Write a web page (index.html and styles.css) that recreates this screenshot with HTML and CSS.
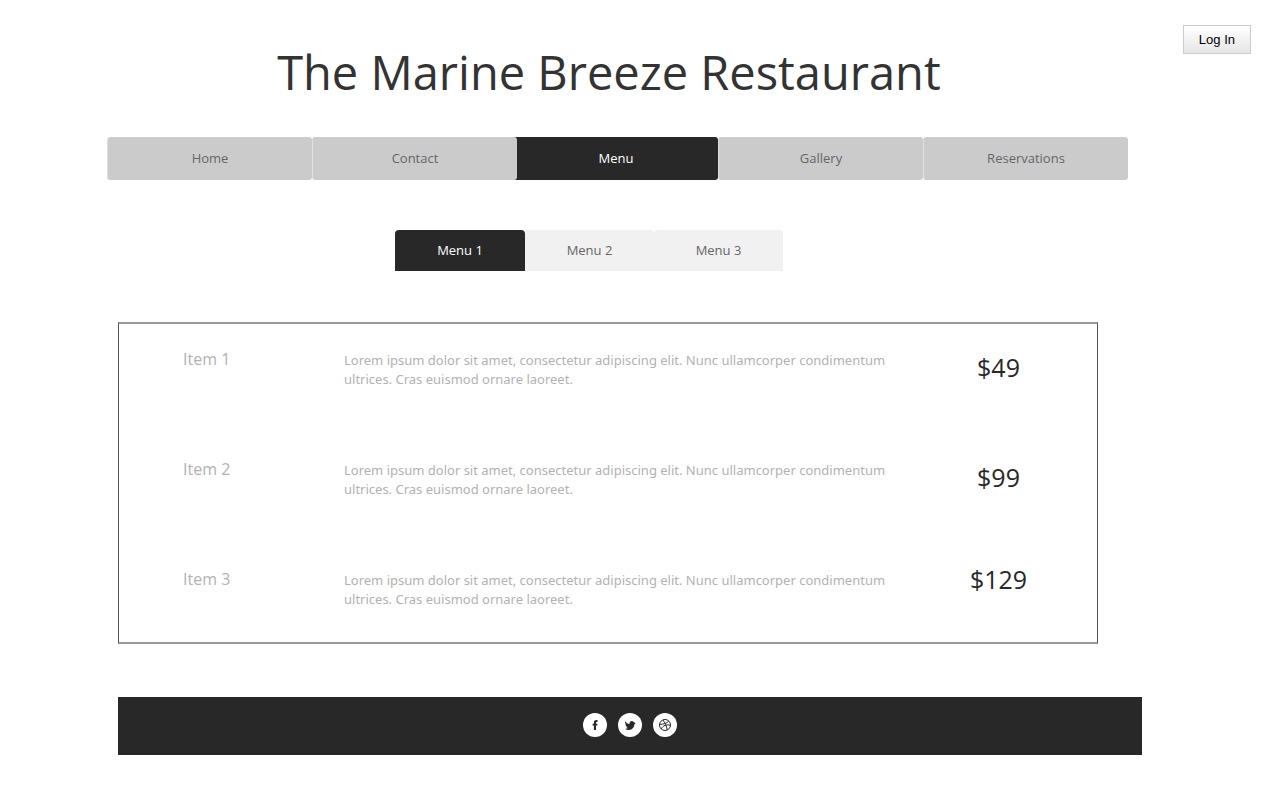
FILE: index.html
```html
<!DOCTYPE html>
<html lang="en">
<head>
<meta charset="utf-8">
<title>The Marine Breeze Restaurant</title>
<link rel="stylesheet" href="styles.css">
</head>
<body>
<header class="header">
  <h1 class="title">The Marine Breeze Restaurant</h1>
  <button class="login" type="button">Log In</button>
</header>
<div class="page">
  <nav class="nav" aria-label="Main">
    <a class="nav-link" href="#home">Home</a>
    <a class="nav-link" href="#contact">Contact</a>
    <a class="nav-link nav-link-active" href="#menu" aria-current="page">Menu</a>
    <a class="nav-link" href="#gallery">Gallery</a>
    <a class="nav-link" href="#reservations">Reservations</a>
  </nav>
  <main class="main">
    <div class="tabs" role="tablist">
      <button class="tab tab-active" type="button" role="tab" aria-selected="true">Menu 1</button>
      <button class="tab" type="button" role="tab" aria-selected="false">Menu 2</button>
      <button class="tab" type="button" role="tab" aria-selected="false">Menu 3</button>
    </div>
    <ul class="card">
      <li class="item">
        <h2 class="item-name">Item 1</h2>
        <p class="item-text">Lorem ipsum dolor sit amet, consectetur adipiscing elit. Nunc ullamcorper condimentum ultrices. Cras euismod ornare laoreet.</p>
        <span class="item-price">$49</span>
      </li>
      <li class="item">
        <h2 class="item-name">Item 2</h2>
        <p class="item-text">Lorem ipsum dolor sit amet, consectetur adipiscing elit. Nunc ullamcorper condimentum ultrices. Cras euismod ornare laoreet.</p>
        <span class="item-price">$99</span>
      </li>
      <li class="item">
        <h2 class="item-name">Item 3</h2>
        <p class="item-text">Lorem ipsum dolor sit amet, consectetur adipiscing elit. Nunc ullamcorper condimentum ultrices. Cras euismod ornare laoreet.</p>
        <span class="item-price item-price-raised">$129</span>
      </li>
    </ul>
  </main>
  <footer class="footer">
    <a class="social" href="#facebook" aria-label="Facebook">
      <svg viewBox="0 0 24 24" width="24" height="24"><path fill="#282828" d="M10.900 17v-4.400H9.600v-1.900h1.300V9.600C10.900 7.900 11.700 7 13.300 7h1.200v1.900h-.7c-.6 0-.8.300-.8.800v1h1.500l-.2 1.900H13V17z"/></svg>
    </a>
    <a class="social" href="#twitter" aria-label="Twitter">
      <svg viewBox="0 0 24 24" width="24" height="24"><path fill="#282828" d="M7.200 8.300c1.200 1.600 2.700 2.500 4.300 2.700-.1-1.800.9-2.900 2.300-2.900.8 0 1.400.3 1.800.9l1.200.2-.4.800 1.500.6-1.500.7c-.2 3.300-2.300 5.700-5.400 5.700-1.600 0-2.900-.4-4-1.300 1.300.1 2.300-.2 3-.8-1-.2-1.600-.8-1.800-1.500h.8c-1-.4-1.500-1.200-1.600-2.200l.8.200c-1-.9-1.400-2-1-3.100z"/></svg>
    </a>
    <a class="social" href="#dribbble" aria-label="Dribbble">
      <svg viewBox="0 0 24 24" width="24" height="24" fill="none" stroke="#282828"><circle cx="12" cy="12" r="5.500"/><path d="M9.800 7c2.300 2.800 3.800 6 4.400 10M6.500 11.300c3.800.1 7-.7 9.200-3.300M8 16c2-3.600 5.500-4.800 9.500-3.700"/></svg>
    </a>
  </footer>
</div>
</body>
</html>
```
FILE: styles.css
```css
* {
  box-sizing: border-box;
}

body {
  margin: 0;
  background: #fff;
  color: #282828;
  font: 13px/19px "Open Sans", "Noto Sans", sans-serif;
}

.header {
  display: grid;
  grid-template-columns: 1fr auto;
  align-items: start;
  padding: 25px 29px 0 35px;
}

.title {
  margin: 14px 0 0;
  color: #333;
  font-size: 47px;
  font-weight: 400;
  line-height: 66px;
  text-align: center;
}

.login {
  padding: 0 15px;
  border: 1px solid #ccc;
  background: linear-gradient(#fff, #e6e6e6);
  color: #000;
  font: 13px/27px "Liberation Sans", Arial, sans-serif;
}

.page {
  padding: 32px 138px 45px 118px;
}

.nav {
  display: grid;
  grid-template-columns: 205fr 205fr 201fr 205fr 205fr;
  margin: 0 14px 0 -11px;
}

.nav-link {
  z-index: 1;
  padding: 12px 0;
  border: solid #e0e0e0;
  border-width: 0 0 0 1px;
  border-radius: 3px;
  background: #cbcbcb;
  color: #666;
  text-align: center;
  text-decoration: none;
}

/* The selected link tucks under its left neighbour. */
.nav-link-active {
  z-index: 0;
  margin-left: -4px;
  border-color: #282828;
  background: #282828;
  color: #fff;
}

.main {
  margin-right: 44px;
}

.tabs {
  display: flex;
  justify-content: center;
  margin: 50px 38px 0 0;
}

.tab {
  width: 129px;
  padding: 11px 0;
  border: 0;
  border-radius: 4px 4px 0 0;
  background: #f1f1f1;
  color: #666;
  font: inherit;
}

.tab-active {
  width: 130px;
  background: #282828;
  color: #fff;
}

.card {
  margin: 51px 0 0;
  padding: 26px 0 0;
  border: solid;
  border-width: 2px 1px;
  border-color: #999 #555;
  list-style: none;
}

.item {
  display: grid;
  grid-template-columns: 161fr 594fr 121fr;
  align-items: start;
  min-height: 110px;
  padding: 0 38px 0 64px;
}

.item:last-child {
  min-height: 72px;
}

.item-name {
  margin: 0;
  color: #b2b2b2;
  font-size: 16px;
  font-weight: 400;
  line-height: 19px;
}

.item-text {
  margin: 1px 0 0;
  padding-right: 24px;
  color: #b2b2b2;
  font-family: "Noto Sans", "Open Sans", sans-serif;
}

.item-price {
  font-size: 25px;
  line-height: 34px;
  text-align: center;
}

.item-price-raised {
  line-height: 19px;
}

.footer {
  display: flex;
  justify-content: center;
  gap: 11px;
  margin-top: 53px;
  padding: 16px 0 18px;
  background: #282828;
}

.social {
  width: 24px;
  height: 24px;
  border-radius: 50%;
  background: #fff;
}

.social svg {
  display: block;
}
```
